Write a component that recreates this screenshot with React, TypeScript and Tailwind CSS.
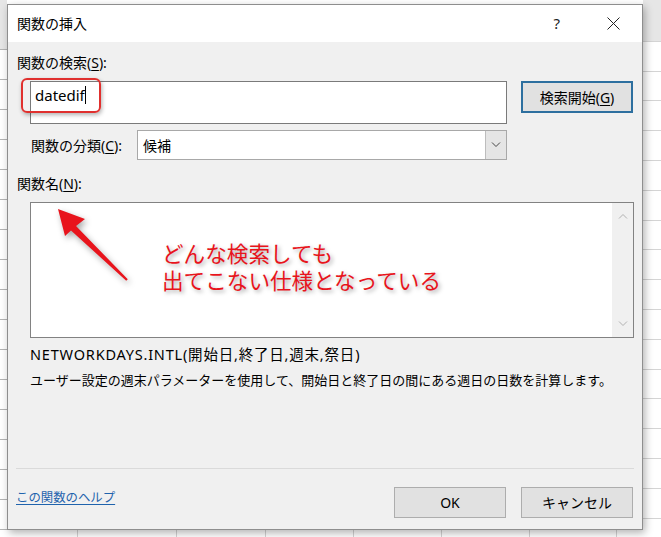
import React from "react";

const FONT = { fontFamily: '"Noto Sans", "Noto Sans CJK JP", sans-serif' };

function U({ c }: { c: string }) {
  return <span className="underline underline-offset-2">{c}</span>;
}

function Chevron({ up, color }: { up?: boolean; color: string }) {
  return (
    <svg width="10" height="6" viewBox="0 0 10 6">
      <path
        d={up ? "M1 5.5 L5 1.5 L9 5.5" : "M1 0.5 L5 4.5 L9 0.5"}
        fill="none"
        stroke={color}
        strokeWidth="1"
      />
    </svg>
  );
}

export default function App() {
  const bottomCells = [78, 99, 89, 88, 88, 88, 87];
  return (
    <div
      className="relative w-[661px] h-[537px] overflow-hidden bg-white flex flex-col text-black"
      style={FONT}
    >
      {/* spreadsheet behind */}
      <div className="flex flex-1">
        <div className="w-[7px] bg-[linear-gradient(to_bottom,#e6e6e6_0,#e6e6e6_49px,transparent_49px),repeating-linear-gradient(to_bottom,transparent_0,transparent_19px,#b4b4b4_19px,#b4b4b4_20px,transparent_20px,transparent_30px)]" />
        <div className="flex-1" />
        <div className="w-[18px] bg-[linear-gradient(to_bottom,#e6e6e6_0,#e6e6e6_41px,transparent_41px),repeating-linear-gradient(to_bottom,transparent_0,transparent_11px,#d4d4d4_11px,#d4d4d4_12px,transparent_12px,transparent_29.8px)]" />
      </div>
      <div className="flex h-[7px]">
        {bottomCells.map((w, i) => (
          <div key={i} className="border-r border-[#d4d4d4]" style={{ width: w }} />
        ))}
      </div>

      {/* dialog */}
      <div className="absolute left-[7px] top-[4px] w-[636px] h-[526px] border border-[#8e8e8e] bg-[#f0f0f0] flex flex-col shadow-[2px_3px_8px_rgba(0,0,0,0.3)]">
        {/* title bar */}
        <div className="h-[37px] bg-white flex items-center pl-[9px] text-[14px]">
          <span>関数の挿入</span>
          <div className="flex-1" />
          <span className="text-[15px] text-[#222] mr-[47px]">?</span>
          <svg width="13" height="13" viewBox="0 0 13 13" className="mr-[22px]">
            <path d="M0.5 0.5 L12.5 12.5 M12.5 0.5 L0.5 12.5" stroke="#222" strokeWidth="1" />
          </svg>
        </div>

        {/* body */}
        <div className="flex-1 flex flex-col pl-[9px] text-[14px]">
          <div className="mt-[11px] leading-[20px]">
            関数の検索(<U c="S" />):
          </div>
          <div className="mt-[8px] flex items-start">
            <div className="ml-[13px] w-[477px] h-[43px] bg-white border border-[#7a7a7a] pl-[4px] pt-[2px]">
              <div className="flex items-center text-[15px] leading-[22px]">
                <span>datedif</span>
                <span className="inline-block w-[1px] h-[18px] bg-black" />
              </div>
            </div>
            <div className="ml-[14px] w-[112px] h-[32px] border-2 border-[#2d6f9f] bg-[#e1e1e1] flex items-center justify-center">
              検索開始(<U c="G" />)
            </div>
          </div>
          <div className="mt-[6px] flex items-center h-[30px]">
            <div className="ml-[14px] w-[106px]">
              関数の分類(<U c="C" />):
            </div>
            <div className="w-[370px] h-[30px] bg-white border border-[#a8a8a8] flex">
              <div className="flex-1 pl-[5px] flex items-center">候補</div>
              <div className="w-[21px] bg-[#e5e5e5] border-l border-[#bdbdbd] flex items-center justify-center">
                <Chevron color="#444" />
              </div>
            </div>
          </div>
          <div className="mt-[14px] leading-[20px]">
            関数名(<U c="N" />):
          </div>
          <div className="relative mt-[8px] ml-[13px] w-[604px] h-[136px] bg-white border border-[#828282] flex">
            <div className="flex-1" />
            <div className="w-[21px] bg-[#f0f0f0] flex flex-col items-center justify-between py-[10px]">
              <Chevron up color="#b0b0b0" />
              <Chevron color="#b0b0b0" />
            </div>
            <div className="absolute left-[131px] top-[37px] text-[21.6px] leading-[27px] text-[#e8141c] [text-shadow:2px_2px_4px_rgba(0,0,0,0.35)]">
              <div>どんな検索しても</div>
              <div>出てこない仕様となっている</div>
            </div>
          </div>
          <div className="mt-[6px] ml-[13px] leading-[20px] text-[14.5px] tracking-[0.8px]">
            NETWORKDAYS.INTL(開始日,終了日,週末,祭日)
          </div>
          <div className="mt-[6px] ml-[13px] leading-[20px] text-[13px]">
            ユーザー設定の週末パラメーターを使用して、開始日と終了日の間にある週日の日数を計算します。
          </div>
          <div className="mt-[78px] ml-[-1px] mr-[8px] h-[1px] bg-[#dadada]" />
          <div className="mt-[18px] flex items-start">
            <span className="ml-[-1px] mt-[1px] leading-[20px] text-[12.4px] text-[#1f63ad] underline underline-offset-2">
              この関数のヘルプ
            </span>
            <div className="flex-1" />
            <div className="w-[112px] h-[31px] border border-[#adadad] bg-[#e1e1e1] flex items-center justify-center">
              OK
            </div>
            <div className="ml-[15px] mr-[9px] w-[112px] h-[31px] border border-[#adadad] bg-[#e1e1e1] flex items-center justify-center">
              キャンセル
            </div>
          </div>
        </div>
      </div>

      {/* red annotation box */}
      <div className="absolute left-[21px] top-[78px] w-[80px] h-[35px] border-2 border-[#e0302e] rounded-[6px] shadow-[1px_2px_4px_rgba(0,0,0,0.3)]" />

      {/* red arrow */}
      <svg
        className="absolute left-[50px] top-[200px] drop-shadow-[2px_3px_3px_rgba(0,0,0,0.35)]"
        width="85"
        height="85"
        viewBox="0 0 85 85"
      >
        <polygon
          points="8,9 35,19 26,26 77.8,79.3 76.2,80.7 21,30.5 15,36"
          fill="#e8141c"
        />
      </svg>
    </div>
  );
}
